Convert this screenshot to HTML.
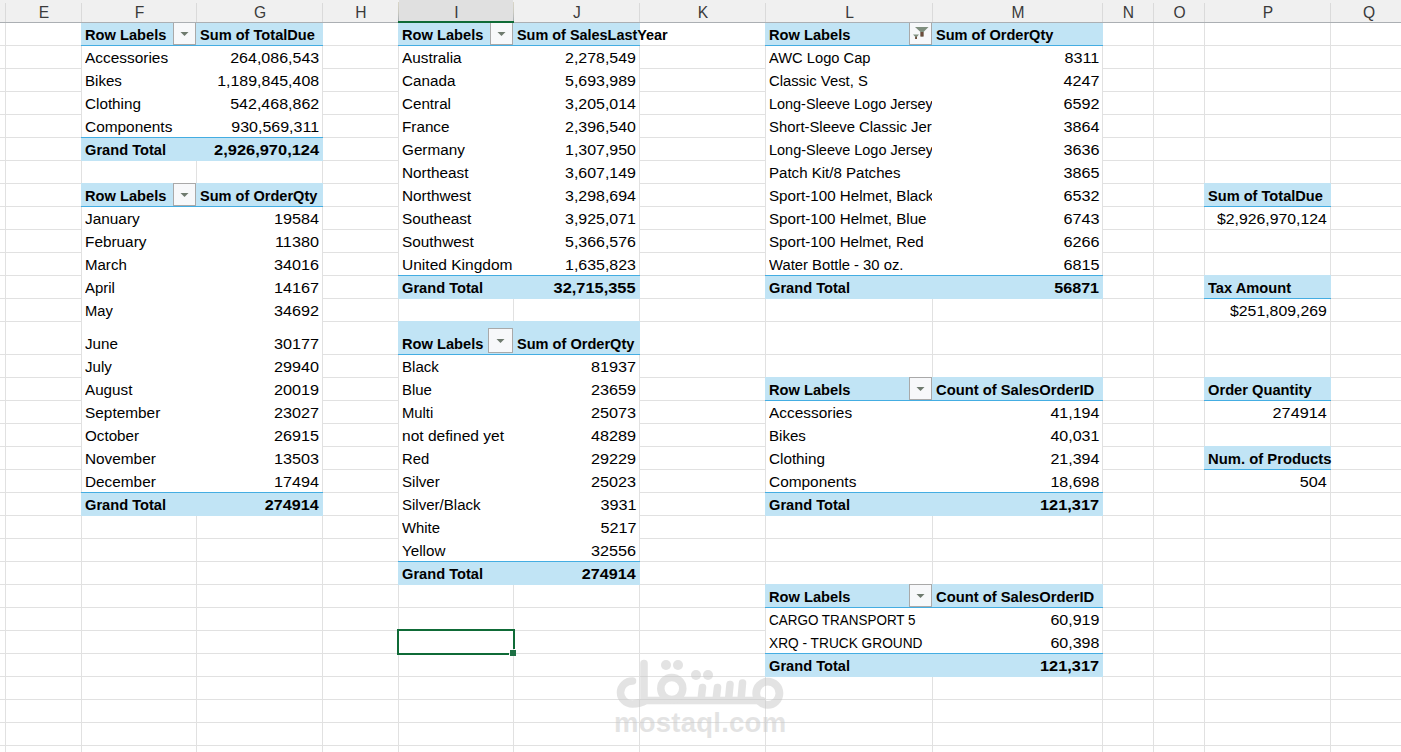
<!DOCTYPE html>
<html><head><meta charset="utf-8"><style>
html,body{margin:0;padding:0;}
body{width:1401px;height:752px;position:relative;overflow:hidden;background:#fff;font-family:"Liberation Sans",sans-serif;}
body>div,body>div>div{position:absolute;}
.t{white-space:nowrap;color:#000;font-size:15.5px;line-height:20px;}
.b{font-weight:700;}
.h{top:2px;height:22px;line-height:22px;text-align:center;font-size:15.6px;color:#3a3a3a;}
.dd{border:1px solid #a9a9a9;background:#f7f8fa;}
.wmt{font-size:27.5px;line-height:40px;font-weight:700;color:rgba(200,200,200,0.5);white-space:nowrap;}
</style></head><body>
<div style="left:5px;top:23px;width:1px;height:729px;background:#e1e1e1;"></div>
<div style="left:81px;top:23px;width:1px;height:729px;background:#e1e1e1;"></div>
<div style="left:196px;top:23px;width:1px;height:729px;background:#e1e1e1;"></div>
<div style="left:322px;top:23px;width:1px;height:729px;background:#e1e1e1;"></div>
<div style="left:398px;top:23px;width:1px;height:729px;background:#e1e1e1;"></div>
<div style="left:513px;top:23px;width:1px;height:729px;background:#e1e1e1;"></div>
<div style="left:639px;top:23px;width:1px;height:729px;background:#e1e1e1;"></div>
<div style="left:765px;top:23px;width:1px;height:729px;background:#e1e1e1;"></div>
<div style="left:932px;top:23px;width:1px;height:729px;background:#e1e1e1;"></div>
<div style="left:1102px;top:23px;width:1px;height:729px;background:#e1e1e1;"></div>
<div style="left:1153px;top:23px;width:1px;height:729px;background:#e1e1e1;"></div>
<div style="left:1204px;top:23px;width:1px;height:729px;background:#e1e1e1;"></div>
<div style="left:1330px;top:23px;width:1px;height:729px;background:#e1e1e1;"></div>
<div style="left:0px;top:45px;width:1401px;height:1px;background:#e1e1e1;"></div>
<div style="left:0px;top:68px;width:1401px;height:1px;background:#e1e1e1;"></div>
<div style="left:0px;top:91px;width:1401px;height:1px;background:#e1e1e1;"></div>
<div style="left:0px;top:114px;width:1401px;height:1px;background:#e1e1e1;"></div>
<div style="left:0px;top:137px;width:1401px;height:1px;background:#e1e1e1;"></div>
<div style="left:0px;top:160px;width:1401px;height:1px;background:#e1e1e1;"></div>
<div style="left:0px;top:183px;width:1401px;height:1px;background:#e1e1e1;"></div>
<div style="left:0px;top:206px;width:1401px;height:1px;background:#e1e1e1;"></div>
<div style="left:0px;top:229px;width:1401px;height:1px;background:#e1e1e1;"></div>
<div style="left:0px;top:252px;width:1401px;height:1px;background:#e1e1e1;"></div>
<div style="left:0px;top:275px;width:1401px;height:1px;background:#e1e1e1;"></div>
<div style="left:0px;top:298px;width:1401px;height:1px;background:#e1e1e1;"></div>
<div style="left:0px;top:321px;width:1401px;height:1px;background:#e1e1e1;"></div>
<div style="left:0px;top:354px;width:1401px;height:1px;background:#e1e1e1;"></div>
<div style="left:0px;top:377px;width:1401px;height:1px;background:#e1e1e1;"></div>
<div style="left:0px;top:400px;width:1401px;height:1px;background:#e1e1e1;"></div>
<div style="left:0px;top:423px;width:1401px;height:1px;background:#e1e1e1;"></div>
<div style="left:0px;top:446px;width:1401px;height:1px;background:#e1e1e1;"></div>
<div style="left:0px;top:469px;width:1401px;height:1px;background:#e1e1e1;"></div>
<div style="left:0px;top:492px;width:1401px;height:1px;background:#e1e1e1;"></div>
<div style="left:0px;top:515px;width:1401px;height:1px;background:#e1e1e1;"></div>
<div style="left:0px;top:538px;width:1401px;height:1px;background:#e1e1e1;"></div>
<div style="left:0px;top:561px;width:1401px;height:1px;background:#e1e1e1;"></div>
<div style="left:0px;top:584px;width:1401px;height:1px;background:#e1e1e1;"></div>
<div style="left:0px;top:607px;width:1401px;height:1px;background:#e1e1e1;"></div>
<div style="left:0px;top:630px;width:1401px;height:1px;background:#e1e1e1;"></div>
<div style="left:0px;top:653px;width:1401px;height:1px;background:#e1e1e1;"></div>
<div style="left:0px;top:676px;width:1401px;height:1px;background:#e1e1e1;"></div>
<div style="left:0px;top:699px;width:1401px;height:1px;background:#e1e1e1;"></div>
<div style="left:0px;top:722px;width:1401px;height:1px;background:#e1e1e1;"></div>
<div style="left:0px;top:745px;width:1401px;height:1px;background:#e1e1e1;"></div>
<div style="left:81px;top:22px;width:242px;height:23px;background:#c1e4f5;"></div>
<div style="left:81px;top:45px;width:242px;height:1px;background:#44ade2;"></div>
<div style="left:82px;top:46px;width:240px;height:91px;background:#ffffff;"></div>
<div style="left:81px;top:137px;width:242px;height:1px;background:#44ade2;"></div>
<div style="left:81px;top:138px;width:242px;height:23px;background:#c1e4f5;"></div>
<div class="dd" style="left:173px;top:22px;width:21px;height:21px;"></div>
<svg style="position:absolute;left:173px;top:22px" width="23" height="23"><path d="M7.5 10.0 L15.5 10.0 L11.5 14.0 Z" fill="#6e7a6e"/></svg>
<div class="t b" style="top:24.63px;left:85px;transform:scale(0.9446,1.0);transform-origin:0 15px;">Row Labels</div>
<div class="t b" style="top:24.63px;left:200px;transform:scale(0.9418,1.0);transform-origin:0 15px;">Sum of TotalDue</div>
<div style="left:85px;top:0;width:111px;height:752px;overflow:hidden;"><div class="t" style="top:47.63px;left:0;transform:scale(0.9944,1.0);transform-origin:0 15px;">Accessories</div></div>
<div class="t" style="top:47.63px;right:1082px;transform:scale(1.0323,1.0);transform-origin:100% 15px;">264,086,543</div>
<div style="left:85px;top:0;width:111px;height:752px;overflow:hidden;"><div class="t" style="top:70.63px;left:0;transform:scale(0.9732,1.0);transform-origin:0 15px;">Bikes</div></div>
<div class="t" style="top:70.63px;right:1082px;transform:scale(1.0281,1.0);transform-origin:100% 15px;">1,189,845,408</div>
<div style="left:85px;top:0;width:111px;height:752px;overflow:hidden;"><div class="t" style="top:93.63px;left:0;transform:scale(0.9840,1.0);transform-origin:0 15px;">Clothing</div></div>
<div class="t" style="top:93.63px;right:1082px;transform:scale(1.0323,1.0);transform-origin:100% 15px;">542,468,862</div>
<div style="left:85px;top:0;width:111px;height:752px;overflow:hidden;"><div class="t" style="top:116.63px;left:0;transform:scale(0.9939,1.0);transform-origin:0 15px;">Components</div></div>
<div class="t" style="top:116.63px;right:1082px;transform:scale(1.0323,1.0);transform-origin:100% 15px;">930,569,311</div>
<div class="t b" style="top:139.63px;left:85px;transform:scale(0.9439,1.0);transform-origin:0 15px;">Grand Total</div>
<div class="t b" style="top:139.63px;right:1082px;transform:scale(1.0599,1.0);transform-origin:100% 15px;">2,926,970,124</div>
<div style="left:81px;top:183px;width:242px;height:23px;background:#c1e4f5;"></div>
<div style="left:81px;top:206px;width:242px;height:1px;background:#44ade2;"></div>
<div style="left:82px;top:207px;width:240px;height:285px;background:#ffffff;"></div>
<div style="left:81px;top:492px;width:242px;height:1px;background:#44ade2;"></div>
<div style="left:81px;top:493px;width:242px;height:23px;background:#c1e4f5;"></div>
<div class="dd" style="left:173px;top:183px;width:21px;height:21px;"></div>
<svg style="position:absolute;left:173px;top:183px" width="23" height="23"><path d="M7.5 10.0 L15.5 10.0 L11.5 14.0 Z" fill="#6e7a6e"/></svg>
<div class="t b" style="top:185.63px;left:85px;transform:scale(0.9446,1.0);transform-origin:0 15px;">Row Labels</div>
<div class="t b" style="top:185.63px;left:200px;transform:scale(0.9398,1.0);transform-origin:0 15px;">Sum of OrderQty</div>
<div style="left:85px;top:0;width:111px;height:752px;overflow:hidden;"><div class="t" style="top:208.63px;left:0;transform:scale(0.9920,1.0);transform-origin:0 15px;">January</div></div>
<div class="t" style="top:208.63px;right:1082px;transform:scale(1.0463,1.0);transform-origin:100% 15px;">19584</div>
<div style="left:85px;top:0;width:111px;height:752px;overflow:hidden;"><div class="t" style="top:231.63px;left:0;transform:scale(0.9903,1.0);transform-origin:0 15px;">February</div></div>
<div class="t" style="top:231.63px;right:1082px;transform:scale(1.0463,1.0);transform-origin:100% 15px;">11380</div>
<div style="left:85px;top:0;width:111px;height:752px;overflow:hidden;"><div class="t" style="top:254.63px;left:0;transform:scale(0.9694,1.0);transform-origin:0 15px;">March</div></div>
<div class="t" style="top:254.63px;right:1082px;transform:scale(1.0463,1.0);transform-origin:100% 15px;">34016</div>
<div style="left:85px;top:0;width:111px;height:752px;overflow:hidden;"><div class="t" style="top:277.63px;left:0;transform:scale(0.9646,1.0);transform-origin:0 15px;">April</div></div>
<div class="t" style="top:277.63px;right:1082px;transform:scale(1.0463,1.0);transform-origin:100% 15px;">14167</div>
<div style="left:85px;top:0;width:111px;height:752px;overflow:hidden;"><div class="t" style="top:300.63px;left:0;transform:scale(0.9493,1.0);transform-origin:0 15px;">May</div></div>
<div class="t" style="top:300.63px;right:1082px;transform:scale(1.0463,1.0);transform-origin:100% 15px;">34692</div>
<div style="left:85px;top:0;width:111px;height:752px;overflow:hidden;"><div class="t" style="top:333.63px;left:0;transform:scale(0.9792,1.0);transform-origin:0 15px;">June</div></div>
<div class="t" style="top:333.63px;right:1082px;transform:scale(1.0463,1.0);transform-origin:100% 15px;">30177</div>
<div style="left:85px;top:0;width:111px;height:752px;overflow:hidden;"><div class="t" style="top:356.63px;left:0;transform:scale(0.9720,1.0);transform-origin:0 15px;">July</div></div>
<div class="t" style="top:356.63px;right:1082px;transform:scale(1.0463,1.0);transform-origin:100% 15px;">29940</div>
<div style="left:85px;top:0;width:111px;height:752px;overflow:hidden;"><div class="t" style="top:379.63px;left:0;transform:scale(0.9816,1.0);transform-origin:0 15px;">August</div></div>
<div class="t" style="top:379.63px;right:1082px;transform:scale(1.0463,1.0);transform-origin:100% 15px;">20019</div>
<div style="left:85px;top:0;width:111px;height:752px;overflow:hidden;"><div class="t" style="top:402.63px;left:0;transform:scale(0.9926,1.0);transform-origin:0 15px;">September</div></div>
<div class="t" style="top:402.63px;right:1082px;transform:scale(1.0463,1.0);transform-origin:100% 15px;">23027</div>
<div style="left:85px;top:0;width:111px;height:752px;overflow:hidden;"><div class="t" style="top:425.63px;left:0;transform:scale(0.9809,1.0);transform-origin:0 15px;">October</div></div>
<div class="t" style="top:425.63px;right:1082px;transform:scale(1.0463,1.0);transform-origin:100% 15px;">26915</div>
<div style="left:85px;top:0;width:111px;height:752px;overflow:hidden;"><div class="t" style="top:448.63px;left:0;transform:scale(0.9898,1.0);transform-origin:0 15px;">November</div></div>
<div class="t" style="top:448.63px;right:1082px;transform:scale(1.0463,1.0);transform-origin:100% 15px;">13503</div>
<div style="left:85px;top:0;width:111px;height:752px;overflow:hidden;"><div class="t" style="top:471.63px;left:0;transform:scale(0.9898,1.0);transform-origin:0 15px;">December</div></div>
<div class="t" style="top:471.63px;right:1082px;transform:scale(1.0463,1.0);transform-origin:100% 15px;">17494</div>
<div class="t b" style="top:494.63px;left:85px;transform:scale(0.9439,1.0);transform-origin:0 15px;">Grand Total</div>
<div class="t b" style="top:494.63px;right:1082px;transform:scale(1.0424,1.0);transform-origin:100% 15px;">274914</div>
<div style="left:398px;top:22px;width:242px;height:23px;background:#c1e4f5;"></div>
<div style="left:398px;top:45px;width:242px;height:1px;background:#44ade2;"></div>
<div style="left:399px;top:46px;width:240px;height:229px;background:#ffffff;"></div>
<div style="left:398px;top:275px;width:242px;height:1px;background:#44ade2;"></div>
<div style="left:398px;top:276px;width:242px;height:23px;background:#c1e4f5;"></div>
<div class="dd" style="left:490px;top:22px;width:21px;height:21px;"></div>
<svg style="position:absolute;left:490px;top:22px" width="23" height="23"><path d="M7.5 10.0 L15.5 10.0 L11.5 14.0 Z" fill="#6e7a6e"/></svg>
<div class="t b" style="top:24.63px;left:402px;transform:scale(0.9446,1.0);transform-origin:0 15px;">Row Labels</div>
<div class="t b" style="top:24.63px;left:517px;transform:scale(0.9306,1.0);transform-origin:0 15px;">Sum of SalesLastYear</div>
<div style="left:402px;top:0;width:111px;height:752px;overflow:hidden;"><div class="t" style="top:47.63px;left:0;transform:scale(0.9876,1.0);transform-origin:0 15px;">Australia</div></div>
<div class="t" style="top:47.63px;right:765px;transform:scale(1.0288,1.0);transform-origin:100% 15px;">2,278,549</div>
<div style="left:402px;top:0;width:111px;height:752px;overflow:hidden;"><div class="t" style="top:70.63px;left:0;transform:scale(0.9827,1.0);transform-origin:0 15px;">Canada</div></div>
<div class="t" style="top:70.63px;right:765px;transform:scale(1.0288,1.0);transform-origin:100% 15px;">5,693,989</div>
<div style="left:402px;top:0;width:111px;height:752px;overflow:hidden;"><div class="t" style="top:93.63px;left:0;transform:scale(0.9802,1.0);transform-origin:0 15px;">Central</div></div>
<div class="t" style="top:93.63px;right:765px;transform:scale(1.0288,1.0);transform-origin:100% 15px;">3,205,014</div>
<div style="left:402px;top:0;width:111px;height:752px;overflow:hidden;"><div class="t" style="top:116.63px;left:0;transform:scale(0.9841,1.0);transform-origin:0 15px;">France</div></div>
<div class="t" style="top:116.63px;right:765px;transform:scale(1.0288,1.0);transform-origin:100% 15px;">2,396,540</div>
<div style="left:402px;top:0;width:111px;height:752px;overflow:hidden;"><div class="t" style="top:139.63px;left:0;transform:scale(0.9851,1.0);transform-origin:0 15px;">Germany</div></div>
<div class="t" style="top:139.63px;right:765px;transform:scale(1.0288,1.0);transform-origin:100% 15px;">1,307,950</div>
<div style="left:402px;top:0;width:111px;height:752px;overflow:hidden;"><div class="t" style="top:162.63px;left:0;transform:scale(0.9883,1.0);transform-origin:0 15px;">Northeast</div></div>
<div class="t" style="top:162.63px;right:765px;transform:scale(1.0288,1.0);transform-origin:100% 15px;">3,607,149</div>
<div style="left:402px;top:0;width:111px;height:752px;overflow:hidden;"><div class="t" style="top:185.63px;left:0;transform:scale(0.9892,1.0);transform-origin:0 15px;">Northwest</div></div>
<div class="t" style="top:185.63px;right:765px;transform:scale(1.0288,1.0);transform-origin:100% 15px;">3,298,694</div>
<div style="left:402px;top:0;width:111px;height:752px;overflow:hidden;"><div class="t" style="top:208.63px;left:0;transform:scale(0.9910,1.0);transform-origin:0 15px;">Southeast</div></div>
<div class="t" style="top:208.63px;right:765px;transform:scale(1.0288,1.0);transform-origin:100% 15px;">3,925,071</div>
<div style="left:402px;top:0;width:111px;height:752px;overflow:hidden;"><div class="t" style="top:231.63px;left:0;transform:scale(0.9917,1.0);transform-origin:0 15px;">Southwest</div></div>
<div class="t" style="top:231.63px;right:765px;transform:scale(1.0288,1.0);transform-origin:100% 15px;">5,366,576</div>
<div style="left:402px;top:0;width:111px;height:752px;overflow:hidden;"><div class="t" style="top:254.63px;left:0;transform:scale(1.0023,1.0);transform-origin:0 15px;">United Kingdom</div></div>
<div class="t" style="top:254.63px;right:765px;transform:scale(1.0288,1.0);transform-origin:100% 15px;">1,635,823</div>
<div class="t b" style="top:277.63px;left:402px;transform:scale(0.9439,1.0);transform-origin:0 15px;">Grand Total</div>
<div class="t b" style="top:277.63px;right:765px;transform:scale(1.0573,1.0);transform-origin:100% 15px;">32,715,355</div>
<div style="left:398px;top:321px;width:242px;height:33px;background:#c1e4f5;"></div>
<div style="left:398px;top:354px;width:242px;height:1px;background:#44ade2;"></div>
<div style="left:399px;top:355px;width:240px;height:206px;background:#ffffff;"></div>
<div style="left:398px;top:561px;width:242px;height:1px;background:#44ade2;"></div>
<div style="left:398px;top:562px;width:242px;height:23px;background:#c1e4f5;"></div>
<div class="dd" style="left:488px;top:328px;width:23px;height:23px;"></div>
<svg style="position:absolute;left:488px;top:328px" width="25" height="25"><path d="M8.5 11.0 L16.5 11.0 L12.5 15.0 Z" fill="#6e7a6e"/></svg>
<div class="t b" style="top:333.63px;left:402px;transform:scale(0.9446,1.0);transform-origin:0 15px;">Row Labels</div>
<div class="t b" style="top:333.63px;left:517px;transform:scale(0.9398,1.0);transform-origin:0 15px;">Sum of OrderQty</div>
<div style="left:402px;top:0;width:111px;height:752px;overflow:hidden;"><div class="t" style="top:356.63px;left:0;transform:scale(0.9732,1.0);transform-origin:0 15px;">Black</div></div>
<div class="t" style="top:356.63px;right:765px;transform:scale(1.0463,1.0);transform-origin:100% 15px;">81937</div>
<div style="left:402px;top:0;width:111px;height:752px;overflow:hidden;"><div class="t" style="top:379.63px;left:0;transform:scale(0.9646,1.0);transform-origin:0 15px;">Blue</div></div>
<div class="t" style="top:379.63px;right:765px;transform:scale(1.0463,1.0);transform-origin:100% 15px;">23659</div>
<div style="left:402px;top:0;width:111px;height:752px;overflow:hidden;"><div class="t" style="top:402.63px;left:0;transform:scale(0.9559,1.0);transform-origin:0 15px;">Multi</div></div>
<div class="t" style="top:402.63px;right:765px;transform:scale(1.0463,1.0);transform-origin:100% 15px;">25073</div>
<div style="left:402px;top:0;width:111px;height:752px;overflow:hidden;"><div class="t" style="top:425.63px;left:0;transform:scale(1.0031,1.0);transform-origin:0 15px;">not defined yet</div></div>
<div class="t" style="top:425.63px;right:765px;transform:scale(1.0463,1.0);transform-origin:100% 15px;">48289</div>
<div style="left:402px;top:0;width:111px;height:752px;overflow:hidden;"><div class="t" style="top:448.63px;left:0;transform:scale(0.9560,1.0);transform-origin:0 15px;">Red</div></div>
<div class="t" style="top:448.63px;right:765px;transform:scale(1.0463,1.0);transform-origin:100% 15px;">29229</div>
<div style="left:402px;top:0;width:111px;height:752px;overflow:hidden;"><div class="t" style="top:471.63px;left:0;transform:scale(0.9741,1.0);transform-origin:0 15px;">Silver</div></div>
<div class="t" style="top:471.63px;right:765px;transform:scale(1.0463,1.0);transform-origin:100% 15px;">25023</div>
<div style="left:402px;top:0;width:111px;height:752px;overflow:hidden;"><div class="t" style="top:494.63px;left:0;transform:scale(0.9701,1.0);transform-origin:0 15px;">Silver/Black</div></div>
<div class="t" style="top:494.63px;right:765px;transform:scale(1.0463,1.0);transform-origin:100% 15px;">3931</div>
<div style="left:402px;top:0;width:111px;height:752px;overflow:hidden;"><div class="t" style="top:517.63px;left:0;transform:scale(0.9595,1.0);transform-origin:0 15px;">White</div></div>
<div class="t" style="top:517.63px;right:765px;transform:scale(1.0463,1.0);transform-origin:100% 15px;">5217</div>
<div style="left:402px;top:0;width:111px;height:752px;overflow:hidden;"><div class="t" style="top:540.63px;left:0;transform:scale(0.9798,1.0);transform-origin:0 15px;">Yellow</div></div>
<div class="t" style="top:540.63px;right:765px;transform:scale(1.0463,1.0);transform-origin:100% 15px;">32556</div>
<div class="t b" style="top:563.63px;left:402px;transform:scale(0.9439,1.0);transform-origin:0 15px;">Grand Total</div>
<div class="t b" style="top:563.63px;right:765px;transform:scale(1.0424,1.0);transform-origin:100% 15px;">274914</div>
<div style="left:765px;top:22px;width:338px;height:23px;background:#c1e4f5;"></div>
<div style="left:765px;top:45px;width:338px;height:1px;background:#44ade2;"></div>
<div style="left:766px;top:46px;width:336px;height:229px;background:#ffffff;"></div>
<div style="left:765px;top:275px;width:338px;height:1px;background:#44ade2;"></div>
<div style="left:765px;top:276px;width:338px;height:23px;background:#c1e4f5;"></div>
<div class="dd" style="left:909px;top:22px;width:21px;height:21px;"></div>
<svg style="position:absolute;left:909px;top:22px" width="23" height="23" viewBox="0 0 23 23"><path d="M6 5 H19.5 L14.5 10 V14.5 H11.5 V10 Z" fill="#7f8f7f"/><path d="M11.5 10 H14.5 V14.5 H11.5 Z" fill="#6d4c3d"/><path d="M4 12.5 H10 L8 14.8 V17 H6.2 V14.8 Z" fill="#7f8f7f"/><path d="M6.2 14.8 H8 V17 H6.2 Z" fill="#6d4c3d"/></svg>
<div class="t b" style="top:24.63px;left:769px;transform:scale(0.9446,1.0);transform-origin:0 15px;">Row Labels</div>
<div class="t b" style="top:24.63px;left:936px;transform:scale(0.9398,1.0);transform-origin:0 15px;">Sum of OrderQty</div>
<div style="left:769px;top:0;width:163px;height:752px;overflow:hidden;"><div class="t" style="top:47.63px;left:0;transform:scale(0.9475,1.0);transform-origin:0 15px;">AWC Logo Cap</div></div>
<div class="t" style="top:47.63px;right:302px;transform:scale(1.0463,1.0);transform-origin:100% 15px;">8311</div>
<div style="left:769px;top:0;width:163px;height:752px;overflow:hidden;"><div class="t" style="top:70.63px;left:0;transform:scale(0.9554,1.0);transform-origin:0 15px;">Classic Vest, S</div></div>
<div class="t" style="top:70.63px;right:302px;transform:scale(1.0463,1.0);transform-origin:100% 15px;">4247</div>
<div style="left:769px;top:0;width:163px;height:752px;overflow:hidden;"><div class="t" style="top:93.63px;left:0;transform:scale(0.9315,1.0);transform-origin:0 15px;">Long-Sleeve Logo Jersey, M</div></div>
<div class="t" style="top:93.63px;right:302px;transform:scale(1.0463,1.0);transform-origin:100% 15px;">6592</div>
<div style="left:769px;top:0;width:163px;height:752px;overflow:hidden;"><div class="t" style="top:116.63px;left:0;transform:scale(0.9586,1.0);transform-origin:0 15px;">Short-Sleeve Classic Jersey, L</div></div>
<div class="t" style="top:116.63px;right:302px;transform:scale(1.0463,1.0);transform-origin:100% 15px;">3864</div>
<div style="left:769px;top:0;width:163px;height:752px;overflow:hidden;"><div class="t" style="top:139.63px;left:0;transform:scale(0.9335,1.0);transform-origin:0 15px;">Long-Sleeve Logo Jersey, L</div></div>
<div class="t" style="top:139.63px;right:302px;transform:scale(1.0463,1.0);transform-origin:100% 15px;">3636</div>
<div style="left:769px;top:0;width:163px;height:752px;overflow:hidden;"><div class="t" style="top:162.63px;left:0;transform:scale(0.9715,1.0);transform-origin:0 15px;">Patch Kit/8 Patches</div></div>
<div class="t" style="top:162.63px;right:302px;transform:scale(1.0463,1.0);transform-origin:100% 15px;">3865</div>
<div style="left:769px;top:0;width:163px;height:752px;overflow:hidden;"><div class="t" style="top:185.63px;left:0;transform:scale(0.9789,1.0);transform-origin:0 15px;">Sport-100 Helmet, Black</div></div>
<div class="t" style="top:185.63px;right:302px;transform:scale(1.0463,1.0);transform-origin:100% 15px;">6532</div>
<div style="left:769px;top:0;width:163px;height:752px;overflow:hidden;"><div class="t" style="top:208.63px;left:0;transform:scale(0.9775,1.0);transform-origin:0 15px;">Sport-100 Helmet, Blue</div></div>
<div class="t" style="top:208.63px;right:302px;transform:scale(1.0463,1.0);transform-origin:100% 15px;">6743</div>
<div style="left:769px;top:0;width:163px;height:752px;overflow:hidden;"><div class="t" style="top:231.63px;left:0;transform:scale(0.9762,1.0);transform-origin:0 15px;">Sport-100 Helmet, Red</div></div>
<div class="t" style="top:231.63px;right:302px;transform:scale(1.0463,1.0);transform-origin:100% 15px;">6266</div>
<div style="left:769px;top:0;width:163px;height:752px;overflow:hidden;"><div class="t" style="top:254.63px;left:0;transform:scale(0.9553,1.0);transform-origin:0 15px;">Water Bottle - 30 oz.</div></div>
<div class="t" style="top:254.63px;right:302px;transform:scale(1.0463,1.0);transform-origin:100% 15px;">6815</div>
<div class="t b" style="top:277.63px;left:769px;transform:scale(0.9439,1.0);transform-origin:0 15px;">Grand Total</div>
<div class="t b" style="top:277.63px;right:302px;transform:scale(1.0424,1.0);transform-origin:100% 15px;">56871</div>
<div style="left:765px;top:377px;width:338px;height:23px;background:#c1e4f5;"></div>
<div style="left:765px;top:400px;width:338px;height:1px;background:#44ade2;"></div>
<div style="left:766px;top:401px;width:336px;height:91px;background:#ffffff;"></div>
<div style="left:765px;top:492px;width:338px;height:1px;background:#44ade2;"></div>
<div style="left:765px;top:493px;width:338px;height:23px;background:#c1e4f5;"></div>
<div class="dd" style="left:909px;top:377px;width:21px;height:21px;"></div>
<svg style="position:absolute;left:909px;top:377px" width="23" height="23"><path d="M7.5 10.0 L15.5 10.0 L11.5 14.0 Z" fill="#6e7a6e"/></svg>
<div class="t b" style="top:379.63px;left:769px;transform:scale(0.9446,1.0);transform-origin:0 15px;">Row Labels</div>
<div class="t b" style="top:379.63px;left:936px;transform:scale(0.9522,1.0);transform-origin:0 15px;">Count of SalesOrderID</div>
<div style="left:769px;top:0;width:163px;height:752px;overflow:hidden;"><div class="t" style="top:402.63px;left:0;transform:scale(0.9944,1.0);transform-origin:0 15px;">Accessories</div></div>
<div class="t" style="top:402.63px;right:302px;transform:scale(1.0336,1.0);transform-origin:100% 15px;">41,194</div>
<div style="left:769px;top:0;width:163px;height:752px;overflow:hidden;"><div class="t" style="top:425.63px;left:0;transform:scale(0.9732,1.0);transform-origin:0 15px;">Bikes</div></div>
<div class="t" style="top:425.63px;right:302px;transform:scale(1.0336,1.0);transform-origin:100% 15px;">40,031</div>
<div style="left:769px;top:0;width:163px;height:752px;overflow:hidden;"><div class="t" style="top:448.63px;left:0;transform:scale(0.9840,1.0);transform-origin:0 15px;">Clothing</div></div>
<div class="t" style="top:448.63px;right:302px;transform:scale(1.0336,1.0);transform-origin:100% 15px;">21,394</div>
<div style="left:769px;top:0;width:163px;height:752px;overflow:hidden;"><div class="t" style="top:471.63px;left:0;transform:scale(0.9939,1.0);transform-origin:0 15px;">Components</div></div>
<div class="t" style="top:471.63px;right:302px;transform:scale(1.0336,1.0);transform-origin:100% 15px;">18,698</div>
<div class="t b" style="top:494.63px;left:769px;transform:scale(0.9439,1.0);transform-origin:0 15px;">Grand Total</div>
<div class="t b" style="top:494.63px;right:302px;transform:scale(1.0528,1.0);transform-origin:100% 15px;">121,317</div>
<div style="left:765px;top:584px;width:338px;height:23px;background:#c1e4f5;"></div>
<div style="left:765px;top:607px;width:338px;height:1px;background:#44ade2;"></div>
<div style="left:766px;top:608px;width:336px;height:45px;background:#ffffff;"></div>
<div style="left:765px;top:653px;width:338px;height:1px;background:#44ade2;"></div>
<div style="left:765px;top:654px;width:338px;height:23px;background:#c1e4f5;"></div>
<div class="dd" style="left:909px;top:584px;width:21px;height:21px;"></div>
<svg style="position:absolute;left:909px;top:584px" width="23" height="23"><path d="M7.5 10.0 L15.5 10.0 L11.5 14.0 Z" fill="#6e7a6e"/></svg>
<div class="t b" style="top:586.63px;left:769px;transform:scale(0.9446,1.0);transform-origin:0 15px;">Row Labels</div>
<div class="t b" style="top:586.63px;left:936px;transform:scale(0.9522,1.0);transform-origin:0 15px;">Count of SalesOrderID</div>
<div style="left:769px;top:0;width:163px;height:752px;overflow:hidden;"><div class="t" style="top:609.63px;left:0;transform:scale(0.8681,1.0);transform-origin:0 15px;">CARGO TRANSPORT 5</div></div>
<div class="t" style="top:609.63px;right:302px;transform:scale(1.0336,1.0);transform-origin:100% 15px;">60,919</div>
<div style="left:769px;top:0;width:163px;height:752px;overflow:hidden;"><div class="t" style="top:632.63px;left:0;transform:scale(0.8840,1.0);transform-origin:0 15px;">XRQ - TRUCK GROUND</div></div>
<div class="t" style="top:632.63px;right:302px;transform:scale(1.0336,1.0);transform-origin:100% 15px;">60,398</div>
<div class="t b" style="top:655.63px;left:769px;transform:scale(0.9439,1.0);transform-origin:0 15px;">Grand Total</div>
<div class="t b" style="top:655.63px;right:302px;transform:scale(1.0528,1.0);transform-origin:100% 15px;">121,317</div>
<div style="left:1204px;top:183px;width:127px;height:23px;background:#c1e4f5;"></div>
<div style="left:1204px;top:206px;width:127px;height:1px;background:#44ade2;"></div>
<div class="t b" style="top:185.63px;left:1208px;transform:scale(0.9418,1.0);transform-origin:0 15px;">Sum of TotalDue</div>
<div class="t" style="top:208.63px;right:74px;transform:scale(1.0183,1.0);transform-origin:100% 15px;">$2,926,970,124</div>
<div style="left:1204px;top:275px;width:127px;height:23px;background:#c1e4f5;"></div>
<div style="left:1204px;top:298px;width:127px;height:1px;background:#44ade2;"></div>
<div class="t b" style="top:277.63px;left:1208px;transform:scale(0.9455,1.0);transform-origin:0 15px;">Tax Amount</div>
<div class="t" style="top:300.63px;right:74px;transform:scale(1.0209,1.0);transform-origin:100% 15px;">$251,809,269</div>
<div style="left:1204px;top:377px;width:127px;height:23px;background:#c1e4f5;"></div>
<div style="left:1204px;top:400px;width:127px;height:1px;background:#44ade2;"></div>
<div class="t b" style="top:379.63px;left:1208px;transform:scale(0.9472,1.0);transform-origin:0 15px;">Order Quantity</div>
<div class="t" style="top:402.63px;right:74px;transform:scale(1.0463,1.0);transform-origin:100% 15px;">274914</div>
<div style="left:1204px;top:446px;width:127px;height:23px;background:#c1e4f5;"></div>
<div style="left:1204px;top:469px;width:127px;height:1px;background:#44ade2;"></div>
<div class="t b" style="top:448.63px;left:1208px;transform:scale(0.9564,1.0);transform-origin:0 15px;">Num. of Products</div>
<div class="t" style="top:471.63px;right:74px;transform:scale(1.0463,1.0);transform-origin:100% 15px;">504</div>
<div style="left:397px;top:629px;width:117px;height:2px;background:#0f6b37;"></div>
<div style="left:397px;top:629px;width:2px;height:26px;background:#0f6b37;"></div>
<div style="left:513px;top:629px;width:2px;height:20px;background:#0f6b37;"></div>
<div style="left:397px;top:653px;width:112px;height:2px;background:#0f6b37;"></div>
<div style="left:510px;top:650px;width:6px;height:6px;background:#1d7044;"></div>
<svg style="position:absolute;left:0;top:0;opacity:0.5" width="1401" height="752">
<g fill="none" stroke="rgb(200,200,200)" stroke-width="7.5" stroke-linecap="round" stroke-linejoin="round">
<path d="M632.5 681 A12 11.5 0 0 0 632.5 704 Q640 704 646 700.5 L762 700.5 M644 663.5 L644 700.5 M701 700 L702.5 687.5 M716 700 L717.5 687.5 M728.5 700 L730 684.5 M741 700 L742.5 683"/>
<circle cx="671.8" cy="688.5" r="11"/>
<circle cx="767.8" cy="693.2" r="11.6" stroke-width="7.8"/>
</g>
<g fill="rgb(200,200,200)">
<circle cx="666" cy="665" r="5"/><circle cx="678" cy="665" r="5"/>
<circle cx="696" cy="675" r="5"/><circle cx="708" cy="675" r="5"/>
</g>
</svg>
<div class="wmt" style="left:614px;top:702.5px;letter-spacing:0.25px;">mostaql.com</div>
<div style="left:0px;top:0px;width:1401px;height:22px;background:#f0f0f0;"></div>
<div style="left:0px;top:22px;width:1401px;height:1px;background:#abafb3;"></div>
<div style="left:399px;top:0px;width:114px;height:21px;background:#e0e0e0;"></div>
<div style="left:398px;top:21px;width:116px;height:2px;background:#0f6b37;"></div>
<div style="left:5px;top:3px;width:1px;height:19px;background:#dadada;"></div>
<div style="left:81px;top:3px;width:1px;height:19px;background:#dadada;"></div>
<div style="left:196px;top:3px;width:1px;height:19px;background:#dadada;"></div>
<div style="left:322px;top:3px;width:1px;height:19px;background:#dadada;"></div>
<div style="left:398px;top:2px;width:1px;height:19px;background:linear-gradient(#d9d6c8,#c9c9c0 55%,#a8aeb4);"></div>
<div style="left:513px;top:2px;width:1px;height:19px;background:linear-gradient(#d9d6c8,#c9c9c0 55%,#a8aeb4);"></div>
<div style="left:639px;top:3px;width:1px;height:19px;background:#dadada;"></div>
<div style="left:765px;top:3px;width:1px;height:19px;background:#dadada;"></div>
<div style="left:932px;top:3px;width:1px;height:19px;background:#dadada;"></div>
<div style="left:1102px;top:3px;width:1px;height:19px;background:#dadada;"></div>
<div style="left:1153px;top:3px;width:1px;height:19px;background:#dadada;"></div>
<div style="left:1204px;top:3px;width:1px;height:19px;background:#dadada;"></div>
<div style="left:1330px;top:3px;width:1px;height:19px;background:#dadada;"></div>
<div class="h" style="left:6px;width:76px;">E</div>
<div class="h" style="left:82px;width:115px;">F</div>
<div class="h" style="left:197px;width:126px;">G</div>
<div class="h" style="left:323px;width:76px;">H</div>
<div class="h" style="left:399px;width:115px;">I</div>
<div class="h" style="left:514px;width:126px;">J</div>
<div class="h" style="left:640px;width:126px;">K</div>
<div class="h" style="left:766px;width:167px;">L</div>
<div class="h" style="left:933px;width:170px;">M</div>
<div class="h" style="left:1103px;width:51px;">N</div>
<div class="h" style="left:1154px;width:51px;">O</div>
<div class="h" style="left:1205px;width:126px;">P</div>
<div class="h" style="left:1331px;width:76px;">Q</div>
</body></html>
